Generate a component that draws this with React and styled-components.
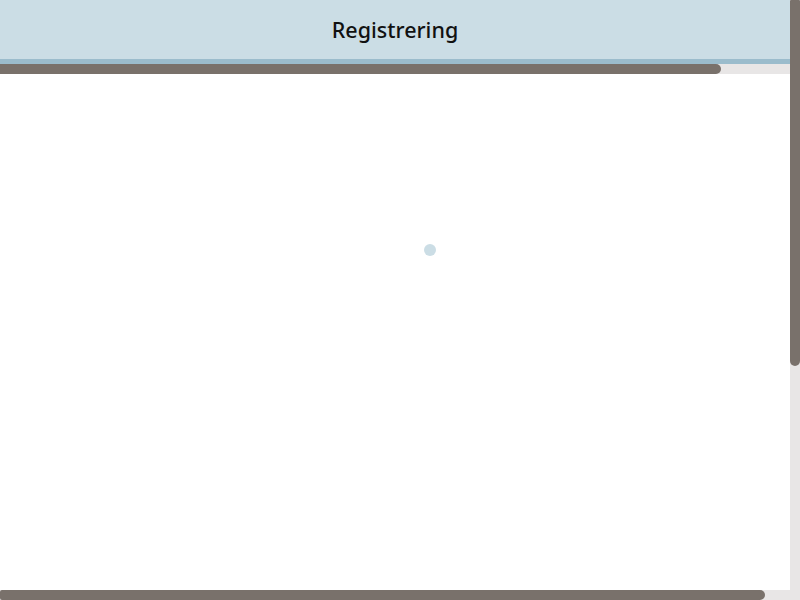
import React from "react";
import styled, { createGlobalStyle } from "styled-components";

const GlobalStyle = createGlobalStyle`
  html, body {
    margin: 0;
    padding: 0;
    background: #ffffff;
    overflow: hidden;
  }

  body {
    font-family: "Noto Sans", "Open Sans", sans-serif;
  }
`;

const Viewport = styled.div`
  width: 800px;
  height: 600px;
  display: grid;
  grid-template-columns: 790px 10px;
  grid-template-rows: 590px 10px;
  overflow: hidden;
`;

const Content = styled.div`
  overflow: hidden;
  display: flex;
  flex-direction: column;
`;

const Header = styled.header`
  height: 59px;
  flex-shrink: 0;
  display: flex;
  align-items: center;
  justify-content: center;
  background-color: #cbdde5;
  border-bottom: 5px solid #9bbccc;
`;

const Title = styled.h1`
  margin: 0;
  font-size: 21.5px;
  font-weight: 500;
  color: #111111;
`;

const Track = styled.div`
  display: flex;
  flex-direction: ${(p) => (p.$vertical ? "column" : "row")};
  background-color: #e8e6e6;
  flex-shrink: 0;
  ${(p) => (p.$vertical ? "width: 10px;" : "height: 10px;")}
`;

// thumb sits flush at its start edge, rounded only at its far end
const Thumb = styled.div`
  background-color: #79716b;
  ${(p) =>
    p.$vertical
      ? `height: ${p.$size}px; border-radius: 1px 1px 5px 5px;`
      : `width: ${p.$size}px; border-radius: ${p.$start || 0}px 5px 5px ${
          p.$start || 0
        }px;`}
`;

const Corner = styled.div`
  background-color: #e8e6e6;
`;

const Main = styled.main`
  flex: 1;
  padding: 170px 0 0 70px;
  display: flex;
  justify-content: center;
  align-items: flex-start;
`;

const Dot = styled.span`
  width: 12px;
  height: 12px;
  border-radius: 50%;
  background-color: #cbdde5;
`;

function App() {
  return (
    <>
      <GlobalStyle />
      <Viewport>
        <Content>
          <Header>
            <Title>Registrering</Title>
          </Header>
          <Track>
            <Thumb $size={721} />
          </Track>
          <Main>
            <Dot />
          </Main>
        </Content>
        <Track $vertical>
          <Thumb $vertical $size={366} />
        </Track>
        <Track>
          <Thumb $size={765} $start={2} />
        </Track>
        <Corner />
      </Viewport>
    </>
  );
}

export default App;
